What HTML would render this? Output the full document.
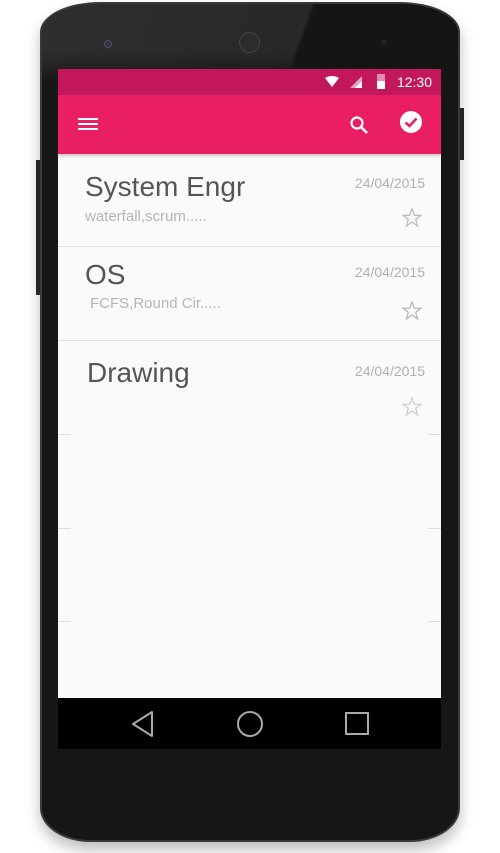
<!DOCTYPE html>
<html><head><meta charset="utf-8"><style>
*{margin:0;padding:0;box-sizing:border-box}
body{width:500px;height:853px;background:#fff;position:relative;overflow:hidden;font-family:"Liberation Sans",sans-serif}
.phone{position:absolute;left:40px;top:2px;width:420px;height:840px;background:#161616;border-radius:60px 60px 50px 50px/30px 30px 34px 34px;border:2px solid #3a3a3a;box-shadow:0 8px 14px rgba(0,0,0,.25);overflow:hidden}
.glare{position:absolute;left:0;top:0;width:420px;height:80px;background:linear-gradient(110deg,#2e2e2e 0%,#282828 60%,#151515 61%);-webkit-mask-image:linear-gradient(#000 60%,transparent);mask-image:linear-gradient(#000 60%,transparent)}
.btn{position:absolute;background:#2a2a2a}
.screen{position:absolute;left:58px;top:69px;width:383px;height:680px;background:#fafafa;overflow:hidden}
.status{position:absolute;left:0;top:0;width:383px;height:26px;background:#c2185b}
.tool{position:absolute;left:0;top:26px;width:383px;height:59px;background:#e91e63;box-shadow:0 2px 3px rgba(0,0,0,.2)}
.time{position:absolute;right:9px;top:5px;color:#fff;font-size:14px}
.item{position:absolute;left:0;width:383px;border-bottom:1px solid #e2e2e2}
.t{position:absolute;left:27px;font-size:28px;color:#555}
.s{position:absolute;left:27px;font-size:15px;color:#b5b5b5}
.d{position:absolute;right:16px;font-size:14px;color:#b0b0b0}
.st{position:absolute;right:19px}
.nav{position:absolute;left:0;top:629px;width:383px;height:51px;background:#000}
.tick{position:absolute;width:13px;height:1px;background:#ddd}
</style></head><body>
<div class="btn" style="left:36px;top:160px;width:5px;height:135px"></div>
<div class="btn" style="left:459px;top:108px;width:5px;height:52px"></div>
<div class="phone"><div class="glare"></div></div>
<div style="position:absolute;left:104px;top:40px;width:8px;height:8px;border-radius:50%;background:#2a3550;border:1px solid #555"></div>
<div style="position:absolute;left:239px;top:32px;width:21px;height:21px;border-radius:50%;background:#2c2c2c;border:1px solid #444"></div>
<div style="position:absolute;left:381px;top:39px;width:6px;height:6px;border-radius:50%;background:#222"></div>
<div class="screen">
 <div class="status">
  <svg style="position:absolute;left:267px;top:7px" width="14" height="12"><path d="M0 2Q7-2 14 2L7 11Z" fill="#fff"/></svg>
  <svg style="position:absolute;left:292px;top:7px" width="12" height="12"><path d="M12 0V12H0Z" fill="#fff" opacity=".6"/><path d="M12 5V12H5Z" fill="#fff"/></svg>
  <div style="position:absolute;left:319px;top:5px;width:8px;height:15px;background:rgba(255,255,255,.5)"></div>
  <div style="position:absolute;left:319px;top:12px;width:8px;height:8px;background:#fff"></div>
  <div class="time">12:30</div>
 </div>
 <div class="tool">
  <div style="position:absolute;left:20px;top:23px;width:20px;height:2px;background:#fff;box-shadow:0 5px 0 #fff,0 10px 0 #fff"></div>
  <svg style="position:absolute;left:291px;top:20px" width="20" height="20"><circle cx="8" cy="8" r="5.5" fill="none" stroke="#fff" stroke-width="2.2"/><path d="M12 12L18 18" stroke="#fff" stroke-width="2.6"/></svg>
  <svg style="position:absolute;left:342px;top:16px" width="22" height="22"><circle cx="11" cy="11" r="11" fill="#fff"/><path d="M5.5 11.5L9.5 15L16.5 7.5" fill="none" stroke="#e91e63" stroke-width="2.6"/></svg>
 </div>
 <div class="item" style="top:85px;height:93px">
  <div class="t" style="top:17px">System Engr</div>
  <div class="s" style="top:54px">waterfall,scrum.....</div>
  <div class="d" style="top:21px">24/04/2015</div>
  <svg class="st" style="top:54px" width="20" height="19"><path d="M10 1L12.4 7.3H19L13.7 11.3L15.6 18L10 14L4.4 18L6.3 11.3L1 7.3H7.6Z" fill="none" stroke="#bbb" stroke-width="1.3"/></svg>
 </div>
 <div class="item" style="top:178px;height:94px">
  <div class="t" style="top:12px">OS</div>
  <div class="s" style="top:48px;left:32px">FCFS,Round Cir.....</div>
  <div class="d" style="top:17px">24/04/2015</div>
  <svg class="st" style="top:54px" width="20" height="19"><path d="M10 1L12.4 7.3H19L13.7 11.3L15.6 18L10 14L4.4 18L6.3 11.3L1 7.3H7.6Z" fill="none" stroke="#bbb" stroke-width="1.3"/></svg>
 </div>
 <div style="position:absolute;left:0;top:272px;width:383px;height:94px">
  <div class="t" style="top:16px;left:29px">Drawing</div>
  <div class="d" style="top:22px">24/04/2015</div>
  <svg class="st" style="top:56px" width="20" height="19"><path d="M10 1L12.4 7.3H19L13.7 11.3L15.6 18L10 14L4.4 18L6.3 11.3L1 7.3H7.6Z" fill="none" stroke="#ccc" stroke-width="1.2"/></svg>
 </div>
 <div class="tick" style="left:0;top:365px"></div><div class="tick" style="right:0;top:365px"></div>
 <div class="tick" style="left:0;top:459px"></div><div class="tick" style="right:0;top:459px"></div>
 <div class="tick" style="left:0;top:552px"></div><div class="tick" style="right:0;top:552px"></div>
 <div class="nav">
  <svg style="position:absolute;left:73px;top:12px" width="24" height="28"><path d="M21 2V26L2 14Z" fill="none" stroke="#aaa" stroke-width="2" stroke-linejoin="round"/></svg>
  <svg style="position:absolute;left:178px;top:12px" width="28" height="28"><circle cx="14" cy="14" r="12" fill="none" stroke="#aaa" stroke-width="2"/></svg>
  <div style="position:absolute;left:287px;top:14px;width:24px;height:23px;border:2px solid #aaa"></div>
 </div>
</div>
</body></html>
